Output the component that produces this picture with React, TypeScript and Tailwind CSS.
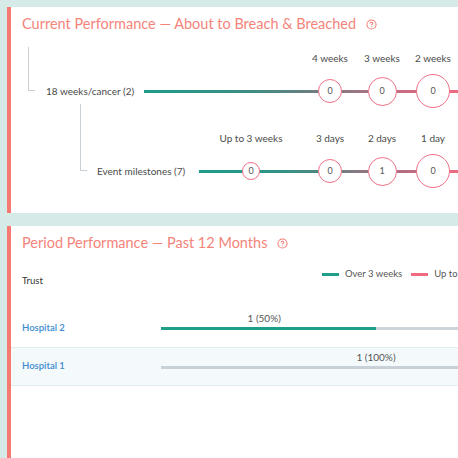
import React from "react";

const font = { fontFamily: "Lato, 'Noto Sans', sans-serif" };

function Help() {
  return (
    <svg width="11" height="11" viewBox="0 0 24 24" fill="none" stroke="#f27f76" strokeWidth="2.2" strokeLinecap="round" strokeLinejoin="round">
      <circle cx="12" cy="12" r="10" />
      <path d="M9.09 9a3 3 0 0 1 5.83 1c0 2-3 3-3 3" />
      <path d="M12 17h.01" />
    </svg>
  );
}

type Col = { label: string; value: string; size: number; w: string };

function Milestone({ c }: { c: Col }) {
  const sizeCls: Record<number, string> = {
    18: "w-[18px] h-[18px]",
    24: "w-[24px] h-[24px]",
    29: "w-[29px] h-[29px]",
    34: "w-[34px] h-[34px]",
  };
  return (
    <div className={`flex flex-col items-center flex-none ${c.w}`}>
      <div className="text-[10px] leading-[14px] text-[#4a4a4a] whitespace-nowrap">{c.label}</div>
      <div className="h-[34px] mt-[9px] flex items-center justify-center">
        <div
          className={`relative z-10 rounded-full bg-white border-[1.5px] border-[#f07087] flex items-center justify-center text-[9px] text-[#555] ${sizeCls[c.size]}`}
        >
          {c.value}
        </div>
      </div>
    </div>
  );
}

export default function App() {
  return (
    <div className="w-[458px] h-[458px] overflow-hidden bg-[#d6eae7] pl-[7px] pt-[7px]" style={font}>
      {/* Panel 1 */}
      <div className="bg-white border-l-4 border-[#f67a72] pl-[11px] pt-[5px] pb-[25px] overflow-hidden">
        <div className="h-[24px] flex items-center gap-[10px] text-[14.5px] text-[#f4847a] whitespace-nowrap">
          <span>Current Performance — About to Breach &amp; Breached</span>
          <Help />
        </div>

        {/* Row 1 */}
        <div className="mt-[11px] ml-[6px] flex items-end">
          <div className="w-[7px] h-[44px] mb-[17px] border-l border-b border-[#c8d0d6] flex-none" />
          <div className="ml-[11px] w-[98px] h-[34px] flex items-center text-[10px] text-[#4a4a4a] whitespace-nowrap flex-none">
            18 weeks/cancer (2)
          </div>
          <div className="relative flex-1 flex items-end">
            <div className="absolute left-0 right-0 bottom-[15px] h-[3px] bg-[linear-gradient(to_right,#1d9c89_0%,#3f8c83_35%,#6f7d80_55%,#a87482_72%,#d06c81_85%,#ef6b82_100%)]" />
            <div className="flex-1" />
            <Milestone c={{ label: "4 weeks", value: "0", size: 24, w: "w-[52px]" }} />
            <Milestone c={{ label: "3 weeks", value: "0", size: 29, w: "w-[52px]" }} />
            <Milestone c={{ label: "2 weeks", value: "0", size: 34, w: "w-[50px]" }} />
          </div>
        </div>

        {/* Row 2 */}
        <div className="-mt-[4px] ml-[58px] flex items-end">
          <div className="w-[7px] h-[67px] mb-[17px] border-l border-b border-[#c8d0d6] flex-none" />
          <div className="ml-[10px] w-[102px] h-[34px] flex items-center text-[10px] text-[#4a4a4a] whitespace-nowrap flex-none">
            Event milestones (7)
          </div>
          <div className="relative flex-1 flex items-end">
            <div className="absolute left-0 right-0 bottom-[15px] h-[3px] bg-[linear-gradient(to_right,#1d9c89_0%,#2a9686_25%,#4a8882_45%,#8a7882_62%,#b06f80_78%,#ef6b82_100%)]" />
            <div className="w-[17px] flex-none" />
            <Milestone c={{ label: "Up to 3 weeks", value: "0", size: 18, w: "w-[70px]" }} />
            <div className="flex-1" />
            <Milestone c={{ label: "3 days", value: "0", size: 24, w: "w-[52px]" }} />
            <Milestone c={{ label: "2 days", value: "1", size: 29, w: "w-[52px]" }} />
            <Milestone c={{ label: "1 day", value: "0", size: 34, w: "w-[50px]" }} />
          </div>
        </div>
      </div>

      {/* Panel 2 */}
      <div className="mt-[13px] h-[300px] bg-white border-l-4 border-[#f67a72] pt-[5px] overflow-hidden">
        <div className="pl-[11px] h-[24px] flex items-center gap-[10px] text-[14.5px] text-[#f4847a] whitespace-nowrap">
          <span>Period Performance — Past 12 Months</span>
          <Help />
        </div>

        <div className="h-[55px] pl-[11px] flex whitespace-nowrap">
          <div className="w-[300px] flex-none pt-[19px] text-[9.5px] leading-[14px] text-[#333]">Trust</div>
          <div className="pt-[12px] flex items-start h-[14px] text-[9.5px] leading-[14px] text-[#555]">
            <div className="flex items-center gap-[6px]">
              <div className="w-[17px] h-[3px] bg-[#1f9e8a]" />
              <span>Over 3 weeks</span>
            </div>
            <div className="flex items-center gap-[6px] ml-[9px]">
              <div className="w-[17px] h-[3px] bg-[#ef6a80]" />
              <span>Up to 3 weeks</span>
            </div>
          </div>
        </div>

        {/* Hospital 2 */}
        <div className="h-[38px] flex border-b border-[#e1ecee]">
          <div className="w-[150px] flex-none pl-[11px] flex items-center text-[9.5px] font-semibold text-[#3a8bd0]">Hospital 2</div>
          <div className="w-[430px] flex-none pt-[2px] flex flex-col">
            <div className="w-[48%] text-center text-[10px] leading-[12px] text-[#555] whitespace-nowrap">1 (50%)</div>
            <div className="mt-[3px] h-[3px] w-full bg-[#cdd5db] flex">
              <div className="w-[50%] h-full bg-[#1f9e8a]" />
            </div>
          </div>
        </div>

        {/* Hospital 1 */}
        <div className="h-[38px] flex border-b border-[#e1ecee] bg-[#f4fafb]">
          <div className="w-[150px] flex-none pl-[11px] flex items-center text-[9.5px] font-semibold text-[#3a8bd0]">Hospital 1</div>
          <div className="w-[430px] flex-none pt-[3px] flex flex-col">
            <div className="w-full text-center text-[10px] leading-[12px] text-[#555] whitespace-nowrap">1 (100%)</div>
            <div className="mt-[3px] h-[3px] w-full bg-[#c8d1d8]" />
          </div>
        </div>
      </div>
    </div>
  );
}
